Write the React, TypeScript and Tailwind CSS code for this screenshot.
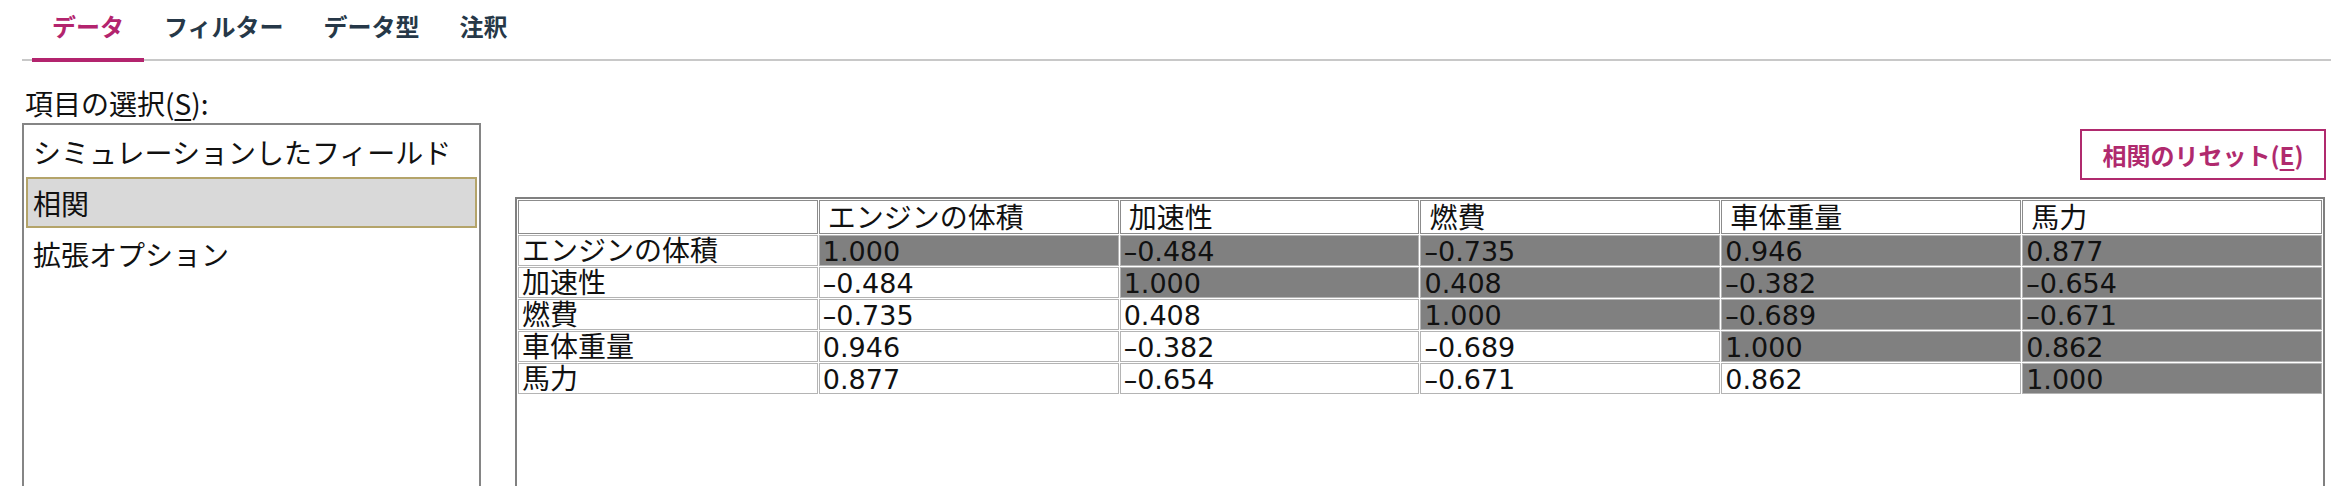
import { Fragment } from "react"

const fields = ["エンジンの体積", "加速性", "燃費", "車体重量", "馬力"]

const matrix = [
  ["1.000", "–0.484", "–0.735", "0.946", "0.877"],
  ["–0.484", "1.000", "0.408", "–0.382", "–0.654"],
  ["–0.735", "0.408", "1.000", "–0.689", "–0.671"],
  ["0.946", "–0.382", "–0.689", "1.000", "0.862"],
  ["0.877", "–0.654", "–0.671", "0.862", "1.000"],
]

const tabs = ["データ", "フィルター", "データ型", "注釈"]

const items = ["シミュレーションしたフィールド", "相関", "拡張オプション"]

export default function App() {
  const selected = 1

  return (
    <div className="h-[486px] w-[2346px] overflow-hidden bg-white font-['Noto_Sans_CJK_JP',sans-serif] text-[#111]">
      {/* tab strip */}
      <div className="ml-[22px] mr-[15px] flex h-[61px] border-b-2 border-[#c8c8c8] pl-[10px]">
        {tabs.map((t, i) => (
          <div
            key={t}
            className={
              i === 0
                ? "relative px-[20px] pt-[10px] text-[24px] font-bold leading-[32px] text-[#b3246e]"
                : "relative px-[20px] pt-[10px] text-[24px] font-bold leading-[32px] text-[#263848]"
            }
          >
            {t}
            {i === 0 && (
              <div className="absolute -bottom-[3px] left-0 right-0 h-[4px] bg-[#b3246e]" />
            )}
          </div>
        ))}
      </div>

      <div className="flex pl-[22px] pr-[21px]">
        {/* left: item picker */}
        <div className="w-[459px] shrink-0">
          <div className="pl-[3px] pt-[25px] text-[28px] leading-[34px]">
            項目の選択(<span className="underline underline-offset-4">S</span>):
          </div>
          <div className="mt-[3px] h-[400px] border-2 border-[#858585] px-[2px] pt-[1px]">
            {items.map((it, i) => (
              <div
                key={it}
                className={
                  i === selected
                    ? "flex h-[51px] items-center border-2 border-[#b4a46a] bg-[#d9d9d9] pl-[5px] text-[28px] leading-[34px]"
                    : "flex h-[51px] items-center border-2 border-transparent pl-[5px] text-[28px] leading-[34px]"
                }
              >
                {it}
              </div>
            ))}
          </div>
        </div>

        {/* right: correlation matrix */}
        <div className="ml-[34px] flex flex-1 flex-col pt-[68px]">
          <button className="-mr-[1px] h-[51px] w-[246px] self-end border-2 border-[#b02a6e] text-[24px] font-bold text-[#b02a6e]">
            相関のリセット(<span className="underline underline-offset-4">E</span>)
          </button>
          <div className="mt-[17px] h-[300px] border-2 border-[#808080]">
            <table className="w-full table-fixed border-separate border-spacing-[1px] font-['DejaVu_Sans','Noto_Sans_CJK_JP',sans-serif] text-[27px] leading-[27px]">
              <thead>
                <tr className="h-[34px]">
                  <th className="border border-[#8c8c8c] bg-white" />
                  {fields.map((f) => (
                    <th
                      key={f}
                      className="border border-[#8c8c8c] bg-white pl-[8px] pt-[2px] text-left text-[28px] font-normal"
                    >
                      {f}
                    </th>
                  ))}
                </tr>
              </thead>
              <tbody>
                {fields.map((f, r) => (
                  <tr key={f} className="h-[31px]">
                    <td className="border border-[#b4b4b4] pl-[3px] pt-[2px] text-[28px]">{f}</td>
                    {matrix[r].map((v, c) => (
                      <Fragment key={c}>
                        <td
                          className={
                            c >= r
                              ? "border border-[#b4b4b4] bg-[#808080] pl-[3px] pt-[2px]"
                              : "border border-[#b4b4b4] bg-white pl-[3px] pt-[2px]"
                          }
                        >
                          {v}
                        </td>
                      </Fragment>
                    ))}
                  </tr>
                ))}
              </tbody>
            </table>
          </div>
        </div>
      </div>
    </div>
  )
}
